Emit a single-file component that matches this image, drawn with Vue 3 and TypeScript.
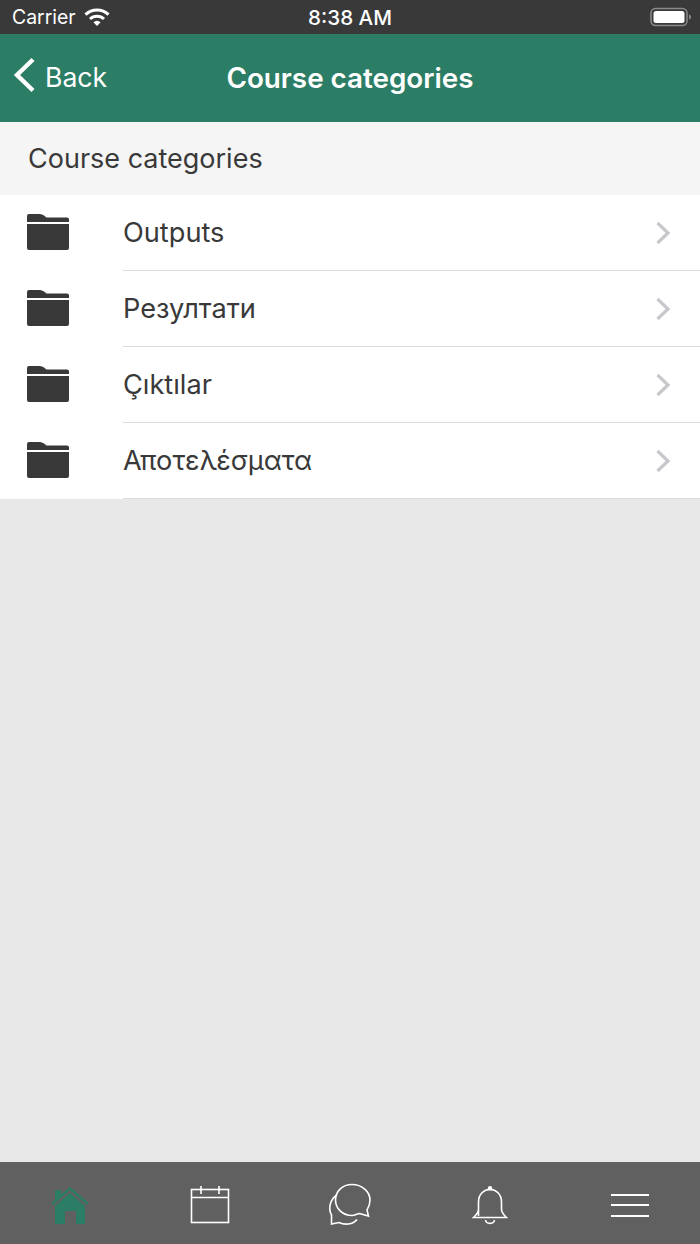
<script setup lang="ts">
const categories = ['Outputs', 'Резултати', 'Çıktılar', 'Αποτελέσματα'];
</script>

<template>
  <div class="screen">
    <div class="status-bar">
      <div class="status-left">
        <span class="carrier">Carrier</span>
        <svg class="wifi" width="26" height="19" viewBox="0 0 26 19">
          <path d="M1.5 6.6 A16.5 16.5 0 0 1 24.5 6.6" fill="none" stroke="#fff" stroke-width="3" />
          <path d="M6 11 A10.2 10.2 0 0 1 20 11" fill="none" stroke="#fff" stroke-width="3" />
          <path d="M9.4 14.2 A5.5 5.5 0 0 1 16.6 14.2 L13 18 Z" fill="#fff" />
        </svg>
      </div>
      <span class="clock">8:38 AM</span>
      <div class="status-right">
        <svg width="42" height="20" viewBox="0 0 42 20">
          <rect x="1" y="1.5" width="36" height="17" rx="4.5" fill="none" stroke="#8a8a8a" stroke-width="1.5" />
          <rect x="3.5" y="4" width="31" height="12" rx="2.5" fill="#fff" />
          <path d="M39 7.5 C40.5 8 41 9 41 10 C41 11 40.5 12 39 12.5 Z" fill="#8a8a8a" />
        </svg>
      </div>
    </div>

    <header class="nav-bar">
      <div class="back">
        <svg width="24" height="36" viewBox="0 0 24 36">
          <path d="M20 2.5 L4 18 L20 33.5" fill="none" stroke="#fff" stroke-width="4.4" />
        </svg>
        <span>Back</span>
      </div>
      <h1>Course categories</h1>
    </header>

    <main class="content">
      <div class="section-title">Course categories</div>
      <ul class="list">
        <li v-for="cat in categories" :key="cat" class="row">
          <div class="folder">
            <svg width="42" height="36" viewBox="0 0 42 36">
              <path d="M0 8 V2 Q0 0 2 0 H13 Q15 0 17 1.5 L19.5 3.5 H40 Q42 3.5 42 5.5 V8 Z" fill="#393939" />
              <path d="M0 10 H42 V34 Q42 36 40 36 H2 Q0 36 0 34 Z" fill="#393939" />
            </svg>
          </div>
          <div class="row-body">
            <span class="row-label">{{ cat }}</span>
            <svg class="chevron" width="16" height="24" viewBox="0 0 16 24">
              <path d="M2.5 2 L13 12 L2.5 22" fill="none" stroke="#c7c7cc" stroke-width="3.2" />
            </svg>
          </div>
        </li>
      </ul>
    </main>

    <nav class="tab-bar">
      <div class="tab">
        <svg width="38" height="40" viewBox="0 0 38 40">
          <path d="M1 19 L19 3.5 L37 19" fill="none" stroke="#2c7d65" stroke-width="2.4" />
          <path d="M4 5 H10 V10 L4 15 Z" fill="#2c7d65" />
          <path d="M4 21 L19 8 L34 21 V39 H25 V26 H14 V39 H4 Z" fill="#2c7d65" />
        </svg>
      </div>
      <div class="tab">
        <svg width="40" height="40" viewBox="0 0 40 40">
          <rect x="1.5" y="4.5" width="37" height="33" fill="none" stroke="#fff" stroke-width="1.6" />
          <path d="M1.5 12.5 H38.5" stroke="#fff" stroke-width="1.6" />
          <path d="M11 1 V9 M29 1 V9" stroke="#fff" stroke-width="1.6" />
        </svg>
      </div>
      <div class="tab">
        <svg width="44" height="44" viewBox="0 0 44 44">
          <path d="M9 12 C2 16 0 26 3.5 32 L3.5 41 L11 39.5 C16 42 25 42 29 36.5" fill="none" stroke="#fff" stroke-width="1.6" />
          <path d="M24 1.5 C14 1.5 7.5 8.5 7.5 17 C7.5 26 15 32.5 24 32.5 C27 32.5 29 30.5 31.5 30.5 L40.5 33 L39 27 C41 24 42 20.5 42 17 C42 8.5 34 1.5 24 1.5 Z" fill="none" stroke="#fff" stroke-width="1.6" />
        </svg>
      </div>
      <div class="tab">
        <svg width="36" height="40" viewBox="0 0 36 40">
          <circle cx="18" cy="3.2" r="2.2" fill="#fff" />
          <path d="M6.5 31 V17 C6.5 9 12 4.5 18 4.5 C24 4.5 29.5 9 29.5 17 V24 C29.5 28 32 30 34.5 32.5 H1.5 C4 30 6.5 28 6.5 24 Z" fill="none" stroke="#fff" stroke-width="1.6" />
          <path d="M13.5 35 C14 39.5 22 39.5 22.5 35" fill="none" stroke="#fff" stroke-width="1.6" />
        </svg>
      </div>
      <div class="tab">
        <div class="burger"><i></i><i></i><i></i></div>
      </div>
    </nav>
  </div>
</template>

<style>
html,
body {
  margin: 0;
  padding: 0;
}
</style>

<style scoped>
* {
  box-sizing: border-box;
}

.screen {
  display: flex;
  flex-direction: column;
  height: 100vh;
  overflow: hidden;
  background: #e8e8e8;
  font-family: Inter, "Noto Sans", sans-serif;
}

.status-bar {
  display: grid;
  grid-template-columns: 1fr auto 1fr;
  align-items: center;
  height: 34px;
  padding: 0 8px;
  background: #393939;
  color: #fff;
}

.status-left {
  display: flex;
  align-items: center;
  gap: 8px;
  padding-left: 4px;
}

.carrier {
  font-size: 19.4px;
}

.clock {
  font-size: 20.6px;
  font-weight: 500;
}

.status-right {
  display: flex;
  justify-content: flex-end;
}

.status-right svg,
.wifi {
  display: block;
}

.nav-bar {
  position: relative;
  display: flex;
  align-items: center;
  justify-content: center;
  height: 88px;
  background: #2c7d65;
  color: #fff;
}

.back {
  position: absolute;
  left: 13px;
  top: 23px;
  display: flex;
  align-items: center;
  gap: 8px;
  font-size: 26.6px;
}

.back span {
  padding-top: 3px;
}

.nav-bar h1 {
  margin: 0;
  font-size: 27.8px;
  font-weight: 600;
}

.content {
  flex: 1;
}

.section-title {
  display: flex;
  align-items: center;
  height: 73px;
  padding-left: 28px;
  background: #f5f5f5;
  color: #393939;
  font-size: 27px;
}

.list {
  margin: 0;
  padding: 0;
  list-style: none;
  background: #fff;
}

.row {
  display: flex;
  height: 76px;
}

.folder {
  width: 123px;
  padding: 19px 0 0 27px;
}

.folder svg {
  display: block;
}

.row-body {
  flex: 1;
  display: flex;
  align-items: center;
  justify-content: space-between;
  padding-right: 29px;
  border-bottom: 1.5px solid #dcdcdc;
  color: #393939;
  font-size: 27.2px;
}

.chevron {
  display: block;
}

.tab-bar {
  display: grid;
  grid-template-columns: repeat(5, 1fr);
  align-items: center;
  height: 82px;
  padding-top: 4px;
  background: #606060;
}

.tab {
  display: flex;
  justify-content: center;
}

.tab svg {
  display: block;
}

.burger {
  display: flex;
  flex-direction: column;
  gap: 8.5px;
  width: 38px;
}

.burger i {
  display: block;
  height: 2px;
  background: #fff;
}
</style>
